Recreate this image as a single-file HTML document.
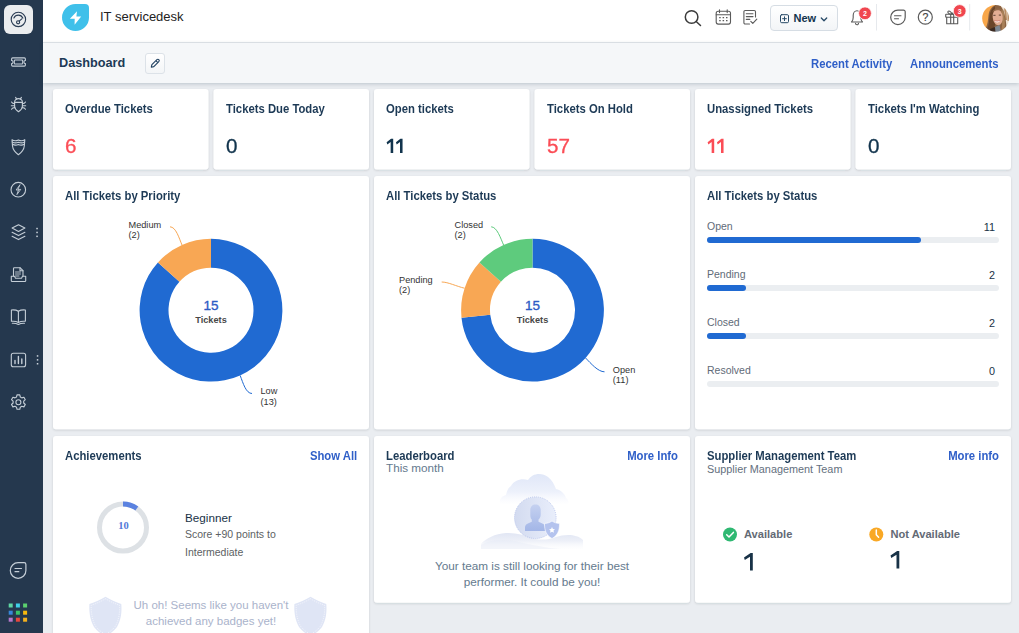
<!DOCTYPE html>
<html><head><meta charset="utf-8">
<style>
*{box-sizing:border-box;margin:0;padding:0}
html,body{width:1019px;height:633px;overflow:hidden;background:#eaedf1;font-family:"Liberation Sans",sans-serif;color:#12344d}
.abs{position:absolute}
#side{position:absolute;left:0;top:0;width:43px;height:633px;background:#25384e}
#hdr{position:absolute;left:43px;top:0;width:976px;height:43px;background:#fff;border-bottom:1px solid #e4e8ec}
#sub{position:absolute;left:43px;top:43px;width:976px;height:40px;background:#f5f7f9;box-shadow:0 1px 4px rgba(24,50,71,.22)}
.card{position:absolute;background:#fff;border-radius:3px;box-shadow:0 1px 2px rgba(24,50,71,.10)}
.t{position:absolute;white-space:nowrap;line-height:1}
.b{font-weight:bold}
.ct{font-size:12px;font-weight:bold;color:#1d3a56;transform:scaleX(.942);transform-origin:0 0}
.num{font-size:19.3px;color:#12344d;-webkit-text-stroke:.3px;transform:scaleX(1.07);transform-origin:0 0;margin-left:.4px}
.red{color:#fb4d56}
.lnk{color:#2f5fc8;font-weight:bold;font-size:12px;transform:scaleX(.942);transform-origin:0 0}
svg{position:absolute;overflow:visible}

.dl{font-size:9.2px;line-height:10.3px;color:#333}
.cn{text-align:center;font-size:13.5px;color:#2c5cc5;-webkit-text-stroke:.35px #2c5cc5}
.cl{text-align:center;font-size:9.2px;font-weight:bold;color:#484848}
.bl{font-size:10.5px;color:#5f6b78}
.bv{font-size:10.800px;color:#183247;text-align:right}
.trk{position:absolute;left:707px;width:292px;height:6px;border-radius:3px;background:#ebeef1}
.trk i{display:block;height:6px;border-radius:3px;background:#206ad2}
</style></head><body>
<div id="side"></div>
<div id="hdr"></div>
<div id="sub"></div>


<!-- sidebar icons -->
<div class="abs" style="left:4px;top:5px;width:29px;height:29px;border-radius:6px;background:#ebedef"></div>
<svg width="43" height="633" style="left:0;top:0" fill="none" stroke="#c5ced7" stroke-width="1.1" stroke-linecap="round" stroke-linejoin="round">
 <!-- dashboard gauge -->
 <g stroke="#2a3c54" stroke-width="1.150">
  <circle cx="18.400" cy="19.400" r="7.200"/>
  <path d="M13.900,17.900a4.900,4.900 0 0 1 8.900,.2"/>
  <circle cx="18.100" cy="22.300" r="1.550"/>
  <path d="M19.200,21.200l2.600-2.400"/>
 </g>
 <!-- ticket -->
 <path d="M12.600,57.900h11.800a1,1 0 0 1 1,1v1.600a1.500,1.500 0 0 0 0,3h0v1.600a1,1 0 0 1-1,1h-11.800a1,1 0 0 1-1-1v-1.600a1.500,1.500 0 0 0 0-3v-1.600a1,1 0 0 1 1-1z"/>
 <rect x="14.300" y="60" width="8.400" height="4" rx=".8"/>
 <!-- bug -->
 <g>
  <path d="M14.600,102.200a3.900,3.600 0 0 1 7.800,0v4c0,2.600-2,4.300-3.900,5.600c-1.900-1.300-3.900-3-3.900-5.600z"/>
  <path d="M14.600,102.400h7.800"/>
  <path d="M16.700,99.300l-1.100-1.900M20.300,99.300l1.100-1.900"/>
  <path d="M14.600,103.600c-1.500,0-2.500-.6-3.100-1.600M14.600,105.700h-3.300M14.600,107.600c-1.500,0-2.500,.6-3.100,1.600M22.400,103.600c1.500,0,2.500-.6,3.100-1.600M22.400,105.700h3.300M22.400,107.600c1.500,0,2.500,.6,3.100,1.600"/>
 </g>
 <!-- shield -->
 <g>
  <path d="M12,139.700c2,1.300,4.300,1.300,6.400,.2c2.100,1.100,4.400,1.100,6.400-.2l-.5,6.300c-.4,4-2.900,6.600-5.900,8.700c-3-2.100-5.500-4.700-5.900-8.700z"/>
  <path d="M12.300,142c2,1.200,4,1.200,6.100,.2c2.100,1,4.100,1,6.100-.2"/>
  <path d="M12.500,144.200c2,1.200,3.900,1.200,5.900,.2c2,1,3.900,1,5.900-.2"/>
 </g>
 <!-- bolt circle -->
 <circle cx="18.300" cy="189.700" r="7.300"/>
 <path d="M19.800,185l-3.700,5h2.400l-1.600,4.600l3.800-5.200h-2.400z" stroke-width=".9"/>
 <!-- layers -->
 <g>
  <path d="M18.500,224.800l6.400,3.300l-6.400,3.300l-6.400-3.300z"/>
  <path d="M12.100,232.300l6.400,3.300l6.400-3.300"/>
  <path d="M12.100,236.300l6.400,3.300l6.400-3.300"/>
 </g>
 <g fill="#cdd5dd" stroke="none"><rect x="36.300" y="227.800" width="1.500" height="1.500"/><rect x="36.300" y="231.700" width="1.500" height="1.500"/><rect x="36.300" y="235.600" width="1.500" height="1.500"/>
  <rect x="36.800" y="355.200" width="1.500" height="1.500"/><rect x="36.800" y="359.100" width="1.500" height="1.500"/><rect x="36.800" y="363" width="1.500" height="1.500"/></g>
 <!-- inbox doc -->
 <g>
  <path d="M13.500,276v-7.500a.8,.8 0 0 1 .8-.8h5.700l3,3v5.300"/>
  <path d="M20,267.700v3h3"/>
  <path d="M15.500,272h5M15.500,274h5M15.500,276h3.500" stroke-width=".9"/>
  <path d="M11.300,276.200h3.200l1,2h6l1-2h3.200v4.500a.8,.8 0 0 1-.8,.8h-12.800a.8,.8 0 0 1-.8-.8z"/>
 </g>
 <!-- book -->
 <g>
  <path d="M18.400,311.200c-2-1.200-4.500-1.500-7-1.200v11.300c2.500-.3,5,0,7,1.200c2-1.200,4.500-1.500,7-1.200v-11.300c-2.500-.3-5,0-7,1.200z"/>
  <path d="M18.400,311.200v11.300"/>
  <path d="M12.300,323.300c2.200-.1,4.300,.2,6.100,1.200c1.800-1,3.900-1.300,6.100-1.200"/>
 </g>
 <!-- chart -->
 <rect x="11.300" y="353.200" width="14.300" height="13.500" rx="2"/>
 <g stroke-width="1.400"><path d="M15,363.500v-3M18.400,363.500v-7M21.800,363.500v-4.500"/></g>
 <!-- gear -->
 <g>
  <circle cx="18.400" cy="402.300" r="2.500"/>
  <path id="gearp" d="M17,394.900h2.800l.5,2.100l1.500,.9l2.100-.6l1.400,2.400l-1.600,1.500v1.800l1.600,1.500l-1.400,2.400l-2.100-.6l-1.500,.9l-.5,2.100h-2.800l-.5-2.100l-1.500-.9l-2.100,.6l-1.400-2.400l1.600-1.500v-1.800l-1.600-1.500l1.400-2.400l2.100,.6l1.500-.9z"/>
 </g>
 <!-- chat bottom -->
 <path d="M10.300,570.500a7.800,7.800 0 0 1 7.800-7.800h6a1.800,1.800 0 0 1 1.800,1.800v6a7.800,7.800 0 0 1-15.600,0z" stroke-width="1.200"/>
 <path d="M15,568.500h6.500M15,571.700h3.800" stroke-width="1.200"/>
</svg>
<!-- app grid -->
<svg width="43" height="633" style="left:0;top:0">
 <rect x="8.700" y="603.500" width="4" height="4" fill="#5fd6a3"/><rect x="15.900" y="603.500" width="4" height="4" fill="#3fd0e8"/><rect x="23.100" y="603.500" width="4" height="4" fill="#5bd06e"/>
 <rect x="8.700" y="610.700" width="4" height="4" fill="#3687d8"/><rect x="15.900" y="610.700" width="4" height="4" fill="#39c56a"/><rect x="23.100" y="610.700" width="4" height="4" fill="#f8b80d"/>
 <rect x="8.700" y="617.700" width="4" height="4" fill="#b678cc"/><rect x="15.900" y="617.700" width="4" height="4" fill="#e8483d"/><rect x="23.100" y="617.700" width="4" height="4" fill="#f4b11f"/>
</svg>

<!-- header icons -->
<div class="abs" style="left:62px;top:4px;width:27px;height:27px;background:#3fc0ea;border-radius:50% 4px 50% 50%"></div>
<svg width="1019" height="43" style="left:0;top:0">
 <path fill="#fff" d="M77,11.200L69.900,18.800H74.700L74.600,24.800L81.200,16.600H76.400Z"/>
 <g fill="none" stroke="#3b3b3b" stroke-width="1.500" stroke-linecap="round">
  <circle cx="691.600" cy="17" r="6.300"/><path d="M696.200,21.500l4.300,4"/>
 </g>
 <g fill="none" stroke="#5a5a5a" stroke-width="1.100" stroke-linecap="round" stroke-linejoin="round">
  <!-- calendar -->
  <rect x="716.200" y="11.300" width="14.300" height="12.800" rx="2"/>
  <path d="M716.200,14.700h14.300M719.500,9.800v2.800M727.200,9.800v2.800"/>
  <g stroke-width="1.300" stroke-linecap="butt"><path d="M719.200,17.600h1.500M722.600,17.600h1.500M726,17.600h1.500M719.200,20.600h1.500M722.600,20.600h1.500M726,20.600h1.500"/></g>
  <!-- notes -->
  <path d="M755.500,17v-5.200a1.300,1.300 0 0 0-1.300-1.300h-9a1.300,1.300 0 0 0-1.300,1.300v10.900a1.300,1.300 0 0 0 1.300,1.300h4.300"/>
  <path d="M746.300,13.800h6.700M746.300,16.600h6.700M746.300,19.400h3.500"/>
  <path d="M750.800,21.300l2,2.100l4-4.300"/>
  <!-- bell -->
  <path d="M851.500,22c1.300-1,1.700-2.300,1.700-4.500v-2.200c0-2.600,1.700-4.600,3.800-4.600s3.800,2,3.800,4.600v2.200c0,2.200,.4,3.500,1.700,4.500z"/>
  <path d="M855.500,23.300a1.500,1.500 0 0 0 3,0"/>
  <!-- chat -->
  <path d="M890.700,17.300a7.200,7.200 0 0 1 7.200-7.200h5.600a1.700,1.700 0 0 1 1.700,1.700v5.500a7.200,7.200 0 0 1-14.500,0z" stroke-width="1.200"/>
  <path d="M894.500,15.700h6.500M894.500,18.700h4"/>
  <!-- help -->
  <circle cx="925.300" cy="17.200" r="7" stroke-width="1.200"/>
  <!-- gift -->
  <rect x="945.700" y="14.300" width="13" height="3" rx=".5"/>
  <path d="M946.700,17.300v6.500h11v-6.500M950.700,14.300v9.500M953.700,14.300v9.500"/>
  <path d="M952.200,14.300c-1-2.200-2.200-3.300-3.300-3.300c-1.700,0-1.700,3.300,3.300,3.300zM952.200,14.300c1-2.200,2.200-3.300,3.300-3.300c1.700,0,1.700,3.300-3.300,3.300z"/>
 </g>
 <path d="M876.500,4v26.500M969.700,4v26.500" stroke="#e6e9ed" stroke-width="1"/>
 <circle cx="865" cy="13.300" r="6.400" fill="#f0464f" stroke="#fff" stroke-width=".8"/>
 <circle cx="959.700" cy="11" r="6.400" fill="#f0464f" stroke="#fff" stroke-width=".8"/>
</svg>
<div class="t" style="left:920.300px;top:12.200px;width:10px;text-align:center;font-size:10.500px;color:#444;-webkit-text-stroke:.2px #444">?</div>
<div class="t" style="left:860px;top:10px;width:10px;text-align:center;font-size:7px;font-weight:bold;color:#fff">2</div>
<div class="t" style="left:954.700px;top:7.700px;width:10px;text-align:center;font-size:7px;font-weight:bold;color:#fff">3</div>
<!-- New button -->
<div class="abs" style="left:770px;top:5px;width:68px;height:26px;border:1px solid #d6dde4;border-radius:4px;background:linear-gradient(#fff,#f3f5f7)"></div>
<svg width="1019" height="43" style="left:0;top:0" fill="none" stroke="#264966" stroke-width="1" stroke-linecap="round" stroke-linejoin="round">
 <rect x="780.500" y="14.700" width="8" height="8" rx="1.200"/><path d="M784.500,16.800v3.800M782.600,18.700h3.800"/>
 <path d="M821.300,18l2.700,2.700l2.700-2.700" stroke-width="1.300"/>
</svg>
<div class="t b" style="left:793.500px;top:13px;font-size:11px;color:#12344d">New</div>
<!-- edit button -->
<div class="abs" style="left:145px;top:53px;width:20px;height:21px;border:1px solid #dce2e8;border-radius:3px;background:linear-gradient(#fff,#f3f5f7)"></div>
<svg width="200" height="90" style="left:0;top:0" fill="none" stroke="#1f4060" stroke-width="1.100" stroke-linejoin="round">
 <path d="M151.300,67.200l.6-2.500l5-5a1.300,1.300 0 0 1 1.900,1.900l-5,5z M155.900,60.700l1.900,1.900"/>
</svg>
<!-- avatar -->
<svg width="1019" height="43" style="left:0;top:0">
 <defs><clipPath id="av"><circle cx="995.600" cy="18.300" r="13.400"/></clipPath>
 <filter id="bl" x="-10%" y="-10%" width="120%" height="120%"><feGaussianBlur stdDeviation=".55"/></filter></defs>
 <g clip-path="url(#av)"><g filter="url(#bl)">
  <rect x="980" y="3" width="32" height="32" fill="#f8a648"/>
  <rect x="1001" y="3" width="12" height="32" fill="#efe2d2"/>
  <path d="M1004,6l2,0l1,14l-2,0z M1007.500,12l1.500,0l0,9l-1.500,0z" fill="#b88b62"/>
  <path d="M997,4.500c-5,1-8,6-8.500,11c-.5,5-1,9-2.500,12l3,6h17c1-6,0-14-1.500-19c-1-5-3.500-10-7.500-10z" fill="#8a6242"/>
  <path d="M995,6c-3,2-5,6-5.500,10c-.5,5-.5,10-2.500,13l5,4l3-8z" fill="#6a4429"/>
  <path d="M1003,9c1.500,5,2.500,13,1.500,22l-3,0c1-7,1-15,-.5-21z" fill="#a98058"/>
  <ellipse cx="997.700" cy="17.200" rx="5" ry="8" fill="#e3ad93" transform="rotate(-6 997.700 17.200)"/>
  <path d="M992.300,12c1.500-4,8-5,11-.5c-3-1.800-7.500-1.500-11,.5z" fill="#94694a"/>
  <path d="M993.300,15.300h2.200M998.800,15.100h2.200" stroke="#4a3328" stroke-width=".9"/>
  <path d="M994.600,20.700c1.600,1,3.800,1,5.400-.2c-.8,2.400-4.400,2.600-5.400,.2z" fill="#fff"/>
  <path d="M994.300,20.400c1.800,.8,4.200,.8,6-.3" stroke="#c96a6a" stroke-width=".6" fill="none"/>
  <path d="M995,27l4.500-2l1.500,7h-6z" fill="#7d8792"/>
  <path d="M990,29l5-2l.5,6h-5z" fill="#3b2a20"/>
 </g></g>
</svg>

<!-- header text -->
<div class="t" style="left:100px;top:10px;font-size:13px;color:#222">IT servicedesk</div>
<div class="t b" style="left:59px;top:56.5px;font-size:12.7px;color:#1d3a56">Dashboard</div>
<div class="t lnk" style="left:811px;top:58px">Recent Activity</div>
<div class="t lnk" style="left:909.5px;top:58px">Announcements</div>

<!-- cards -->
<svg width="1019" height="633" style="left:0;top:0">
 <defs><filter id="cs" x="-5%" y="-5%" width="110%" height="115%"><feDropShadow dx="0" dy="1" stdDeviation="1" flood-color="#1c2a38" flood-opacity=".14"/></filter></defs>
 <g fill="#fff" filter="url(#cs)">
  <rect x="53.0" y="89" width="155.5" height="80.5" rx="3"/>
  <rect x="213.5" y="89" width="155.5" height="80.5" rx="3"/>
  <rect x="374.0" y="89" width="155.5" height="80.5" rx="3"/>
  <rect x="534.5" y="89" width="155.5" height="80.5" rx="3"/>
  <rect x="695.0" y="89" width="155.5" height="80.5" rx="3"/>
  <rect x="855.5" y="89" width="155.5" height="80.5" rx="3"/>
  <rect x="53" y="176" width="316" height="253.2" rx="3"/>
  <rect x="374" y="176" width="316" height="253.2" rx="3"/>
  <rect x="695" y="176" width="316" height="253.2" rx="3"/>
  <rect x="53" y="436" width="316" height="210" rx="3"/>
  <rect x="374" y="436" width="316" height="166.8" rx="3"/>
  <rect x="695" y="436" width="316" height="166.8" rx="3"/>
 </g>
</svg>
<!-- row 1 -->
<div class="t ct" style="left:65px;top:103px">Overdue Tickets</div>
<div class="t ct" style="left:226px;top:103px">Tickets Due Today</div>
<div class="t ct" style="left:386px;top:103px">Open tickets</div>
<div class="t ct" style="left:547px;top:103px">Tickets On Hold</div>
<div class="t ct" style="left:707px;top:103px">Unassigned Tickets</div>
<div class="t ct" style="left:868px;top:103px">Tickets I'm Watching</div>
<div class="t num red" style="left:65px;top:136.5px">6</div>
<div class="t num" style="left:226px;top:136.5px">0</div>
<div class="t num red" style="left:547px;top:136.5px">57</div>
<div class="t num" style="left:868px;top:136.5px">0</div>

<svg width="1019" height="633" style="left:0;top:0"><path fill="#12344d" d="M393.20,138.80V152.90H390.65V141.90L387.35,144.50L386.60,142.30L391.03,138.80ZM402.55,138.80V152.90H400.00V141.90L396.70,144.50L395.95,142.30L400.38,138.80Z"/><path fill="#fb4d56" d="M714.20,138.80V152.90H711.65V141.90L708.35,144.50L707.60,142.30L712.03,138.80ZM723.55,138.80V152.90H721.00V141.90L717.70,144.50L716.95,142.30L721.38,138.80Z"/></svg>
<!-- row 2 -->
<div class="t ct" style="left:65px;top:190px">All Tickets by Priority</div>
<div class="t ct" style="left:386px;top:190px">All Tickets by Status</div>
<div class="t ct" style="left:707px;top:190px">All Tickets by Status</div>

<!-- donuts -->
<svg width="1019" height="633" style="left:0;top:0" id="charts">
 <path fill="#206ad2" d="M211.00,238.80A71.4,71.4 0 1 1 157.94,262.42L179.42,281.76A42.5,42.5 0 1 0 211.00,267.70Z"/>
 <path fill="#f8a754" d="M157.94,262.42A71.4,71.4 0 0 1 211.00,238.80L211.00,267.70A42.5,42.5 0 0 0 179.42,281.76Z"/>
 <path fill="#206ad2" d="M532.50,238.80A71.4,71.4 0 1 1 461.49,317.66L490.23,314.64A42.5,42.5 0 1 0 532.50,267.70Z"/>
 <path fill="#f8a754" d="M461.49,317.66A71.4,71.4 0 0 1 479.44,262.42L500.92,281.76A42.5,42.5 0 0 0 490.23,314.64Z"/>
 <path fill="#5ecb7d" d="M479.44,262.42A71.4,71.4 0 0 1 532.50,238.80L532.50,267.70A42.5,42.5 0 0 0 500.92,281.76Z"/>
 <g fill="none" stroke-width="1">
  <path stroke="#f8a754" d="M170,226.8C176,227 179,238 182,245"/>
  <path stroke="#206ad2" d="M252,393.5C246,393.5 243,383 240.2,375.5"/>
  <path stroke="#5ecb7d" d="M491.2,226.8C497,227 500.5,238 503.6,245"/>
  <path stroke="#f8a754" d="M441.7,282C448,282 457,286.5 464.5,288.2"/>
  <path stroke="#206ad2" d="M604.5,371.8C598,371.8 591,363.5 585.6,358"/>
 </g>
</svg>
<div class="t dl" style="left:128.5px;top:220px">Medium<br>(2)</div>
<div class="t dl" style="left:260.5px;top:386.3px">Low<br>(13)</div>
<div class="t dl" style="left:454.5px;top:220px">Closed<br>(2)</div>
<div class="t dl" style="left:399px;top:275px">Pending<br>(2)</div>
<div class="t dl" style="left:612.8px;top:364.8px">Open<br>(11)</div>
<div class="t cn" style="left:181px;top:299px;width:60px">15</div>
<div class="t cl" style="left:181px;top:316px;width:60px">Tickets</div>
<div class="t cn" style="left:502.5px;top:299px;width:60px">15</div>
<div class="t cl" style="left:502.5px;top:316px;width:60px">Tickets</div>

<!-- bars -->
<div class="t bl" style="left:707px;top:221px">Open</div><div class="t bv" style="left:945px;top:222px;width:50px">11</div>
<div class="trk" style="top:237px"><i style="width:214px"></i></div>
<div class="t bl" style="left:707px;top:269px">Pending</div><div class="t bv" style="left:945px;top:270px;width:50px">2</div>
<div class="trk" style="top:285px"><i style="width:39px"></i></div>
<div class="t bl" style="left:707px;top:317px">Closed</div><div class="t bv" style="left:945px;top:318px;width:50px">2</div>
<div class="trk" style="top:333px"><i style="width:39px"></i></div>
<div class="t bl" style="left:707px;top:365px">Resolved</div><div class="t bv" style="left:945px;top:366px;width:50px">0</div>
<div class="trk" style="top:381px"></div>

<!-- row 3 -->
<div class="t ct" style="left:65px;top:450px">Achievements</div>
<div class="t lnk" style="right:662px;top:450px;transform-origin:100% 0">Show All</div>
<div class="t ct" style="left:386px;top:450px">Leaderboard</div>
<div class="t lnk" style="right:341px;top:450px;transform-origin:100% 0">More Info</div>
<div class="t ct" style="left:707px;top:450px">Supplier Management Team</div>
<div class="t lnk" style="right:20px;top:450px;transform-origin:100% 0">More info</div>
<div class="t" style="left:386px;top:461.5px;font-size:11.700px;color:#64798e">This month</div>
<div class="t" style="left:707px;top:464px;font-size:10.850px;color:#64707e">Supplier Management Team</div>

<!-- achievements -->
<svg width="1019" height="633" style="left:0;top:0">
 <circle cx="123" cy="527.5" r="23.5" fill="none" stroke="#dde1e5" stroke-width="5"/>
 <path fill="#5b82e0" d="M123.00,501.50A26,26 0 0 1 138.28,506.47L135.34,510.51A21,21 0 0 0 123.00,506.50Z"/>
 <g fill="#dfe5f5">
  <path id="sh" d="M105.500,596.700C101,599.500 95,602 89.400,604C89,612 90,620 94,627C97,631 101,634 105.500,636C110,634 114,631 117,627C121,620 122,612 121.300,604C116,602 110,599.500 105.500,596.700Z"/>
  <use href="#sh" x="205"/>
 </g>
 <g fill="none" stroke="#fff" stroke-width=".7" stroke-dasharray="1 1.200" opacity=".9">
  <path id="shd" d="M105.500,598.700C101.500,601.200 96.500,603.500 91.200,605.300C91,612 92,619.500 95.500,626C98,629.500 101.500,632.300 105.500,634C109.500,632.300 113,629.500 115.500,626C119,619.500 120,612 119.600,605.300C114.500,603.500 109.500,601.200 105.500,598.700Z"/>
  <use href="#shd" x="205"/>
 </g>
</svg>
<div class="t" style="left:93.600px;top:521.200px;width:60px;text-align:center;font-family:'Liberation Serif',serif;font-weight:bold;font-size:10.5px;color:#5279d8">10</div>
<div class="t" style="left:185px;top:512px;font-size:11.700px;color:#183247">Beginner</div>
<div class="t" style="left:185px;top:529px;font-size:10.5px;color:#5c5f63;line-height:17.500px;top:526.200px">Score +90 points to<br>Intermediate</div>
<div class="t" style="left:111px;top:600px;width:200px;text-align:center;font-size:11.500px;color:#aab3cb">Uh oh! Seems like you haven't</div>
<div class="t" style="left:111px;top:615.500px;width:200px;text-align:center;font-size:11.500px;color:#aab3cb">achieved any badges yet!</div>

<!-- leaderboard illustration -->
<svg width="1019" height="633" style="left:0;top:0">
 <defs>
  <linearGradient id="cg" x1="0" y1="0" x2="0" y2="1"><stop offset="0" stop-color="#e0e7f8"/><stop offset=".6" stop-color="#edf1fb"/><stop offset="1" stop-color="#f8f9fe" stop-opacity=".15"/></linearGradient>
  <linearGradient id="gg" x1="0" y1="0" x2="0" y2="1"><stop offset="0" stop-color="#e1e6f4"/><stop offset=".5" stop-color="#edf0f8"/><stop offset="1" stop-color="#fafbfd" stop-opacity=".2"/></linearGradient>
  <linearGradient id="pg" x1="0" y1="0" x2="0" y2="1"><stop offset="0" stop-color="#c5d1f0"/><stop offset="1" stop-color="#a3b6e7"/></linearGradient>
  <linearGradient id="ci" x1="0" y1="0" x2="1" y2="0"><stop offset="0" stop-color="#d3dbf0"/><stop offset="1" stop-color="#e9eefb"/></linearGradient>
 </defs>
 <path fill="url(#cg)" d="M500,504c-1-5,2-8,6-9c1-4,2-7,5-9c3-6,11-8,17-6c4-7,14-8,20-3c4,3,6,7,8,12c5,1,9,5,10,9c2,1,3,4,2,6z"/>
 <path fill="url(#gg)" d="M481,549v-5c5-6,14-10,25-11c10-.500,18,2,26,5c8,2.500,16,2,24-1c9-3,21-3,27,3v9z"/>
 <path fill="#e6eaf6" opacity=".45" d="M481,549v-4c8-5,20-6,32-4c12,2,25,6,47,8z"/>
 <circle cx="535.300" cy="517.700" r="20.800" fill="url(#ci)" stroke="#a9b8e6" stroke-width=".7" stroke-dasharray="1 1"/>
 <path fill="url(#pg)" d="M530.300,510c0-3.500,2.200-5.500,5.200-5.500s5.200,2,5.200,5.500v4.500c0,2.500-1,4-2.200,5v2.300c3,1.200,6.300,2.300,6.800,5.200v4h-20.300v-4c.5-2.900,3.800-4,6.800-5.200v-2.300c-1.200-1-1.500-2.500-1.500-5z"/>
 <path fill="#b4c3ee" stroke="#fff" stroke-width=".6" d="M552,521c-2,1.500-4.500,2.300-7.500,2.500c0,7,1.500,11.500,7.500,15c6-3.500,7.500-8,7.500-15c-3-.2-5.500-1-7.500-2.500z"/>
 <path fill="#fff" d="M552,527l.9,1.900l2.100,.3l-1.500,1.400l.4,2.100l-1.900-1l-1.900,1l.4-2.100l-1.500-1.400l2.100-.3z"/>
</svg>
<div class="t" style="left:382px;top:558.200px;width:300px;text-align:center;font-size:11.750px;line-height:16px;color:#647a8e">Your team is still looking for their best<br>performer. It could be you!</div>

<!-- supplier -->
<svg width="1019" height="633" style="left:0;top:0">
 <circle cx="730" cy="534.5" r="7" fill="#2fb872"/>
 <path d="M726.700,534.700l2.300,2.300l4.400-4.600" fill="none" stroke="#fff" stroke-width="1.500" stroke-linecap="round" stroke-linejoin="round"/>
 <circle cx="876.300" cy="534.500" r="7" fill="#f9a825"/>
 <path d="M876.300,530v4.700l2.300,2.600" fill="none" stroke="#fff" stroke-width="1.500" stroke-linecap="round" stroke-linejoin="round"/>
</svg>
<svg width="1019" height="633" style="left:0;top:0"><path fill="#183247" d="M752.8,553.1V570.4H750.0V556.7L744.8,559.9L744.0,557.4L750.6,553.1Z"/><path fill="#183247" d="M899.3,551.1V568.4H896.5V554.7L891.3,557.9L890.5,555.4L897.1,551.1Z"/></svg>
<div class="t b" style="left:744px;top:528.700px;font-size:11.100px;color:#636a75">Available</div>
<div class="t b" style="left:890.500px;top:528.700px;font-size:11.100px;color:#636a75">Not Available</div>

</body></html>
